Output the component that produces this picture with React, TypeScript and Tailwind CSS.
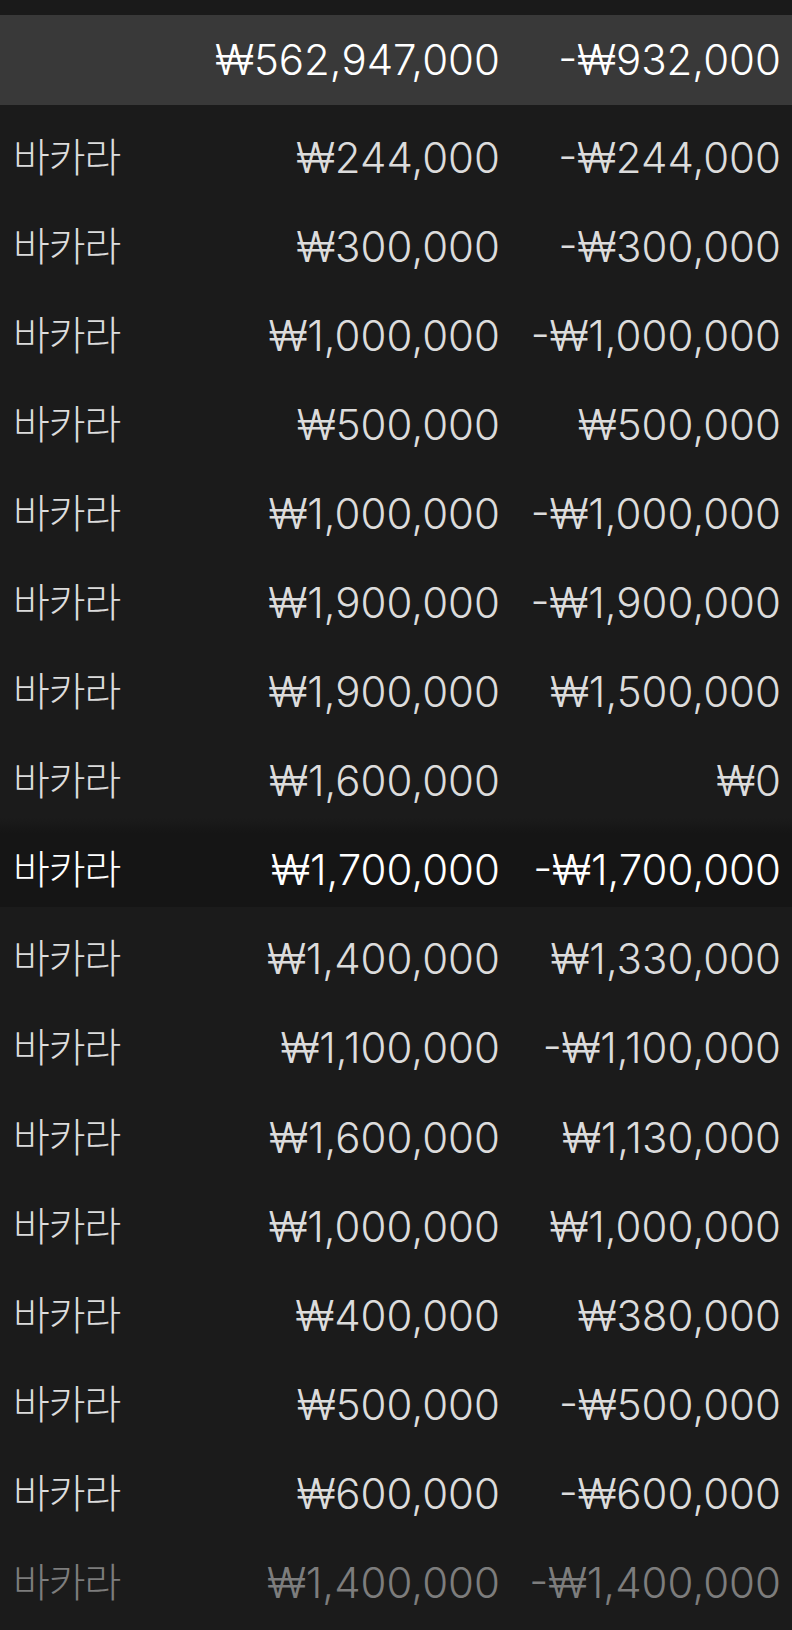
const rows: { bet: string; result: string; tone?: "active" | "fade" }[] = [
  { bet: "₩244,000", result: "-₩244,000" },
  { bet: "₩300,000", result: "-₩300,000" },
  { bet: "₩1,000,000", result: "-₩1,000,000" },
  { bet: "₩500,000", result: "₩500,000" },
  { bet: "₩1,000,000", result: "-₩1,000,000" },
  { bet: "₩1,900,000", result: "-₩1,900,000" },
  { bet: "₩1,900,000", result: "₩1,500,000" },
  { bet: "₩1,600,000", result: "₩0" },
  { bet: "₩1,700,000", result: "-₩1,700,000", tone: "active" },
  { bet: "₩1,400,000", result: "₩1,330,000" },
  { bet: "₩1,100,000", result: "-₩1,100,000" },
  { bet: "₩1,600,000", result: "₩1,130,000" },
  { bet: "₩1,000,000", result: "₩1,000,000" },
  { bet: "₩400,000", result: "₩380,000" },
  { bet: "₩500,000", result: "-₩500,000" },
  { bet: "₩600,000", result: "-₩600,000" },
  { bet: "₩1,400,000", result: "-₩1,400,000", tone: "fade" },
];

export default function App() {
  return (
    <div className="min-h-[1630px] w-[792px] bg-[#1b1b1b] font-['Inter','Noto_Sans_CJK_KR',sans-serif] text-[42px] font-light leading-none">
      <div className="h-[15px] bg-[#1a1a1a]" />

      {/* totals */}
      <div className="flex h-[90px] items-center bg-[#393939] pl-[13px] pr-[11px] text-white">
        <span className="flex-1" />
        <span className="w-[300px] text-right">₩562,947,000</span>
        <span className="w-[281px] text-right">-₩932,000</span>
      </div>

      {rows.map((r, i) => (
        <div
          key={i}
          className={`flex h-[89.1px] items-center pl-[13px] pr-[11px] pt-[16px] ${
            r.tone === "active"
              ? "bg-[linear-gradient(to_bottom,#1b1b1b_0px,#151515_15px)] text-white"
              : r.tone === "fade"
                ? "text-[#7d7d7d]"
                : "text-[#dcdcdc]"
          }`}
        >
          <span className="flex-1 text-[40px] tracking-[-1px]">바카라</span>
          <span className="w-[300px] text-right">{r.bet}</span>
          <span className="w-[281px] text-right">{r.result}</span>
        </div>
      ))}
    </div>
  );
}
